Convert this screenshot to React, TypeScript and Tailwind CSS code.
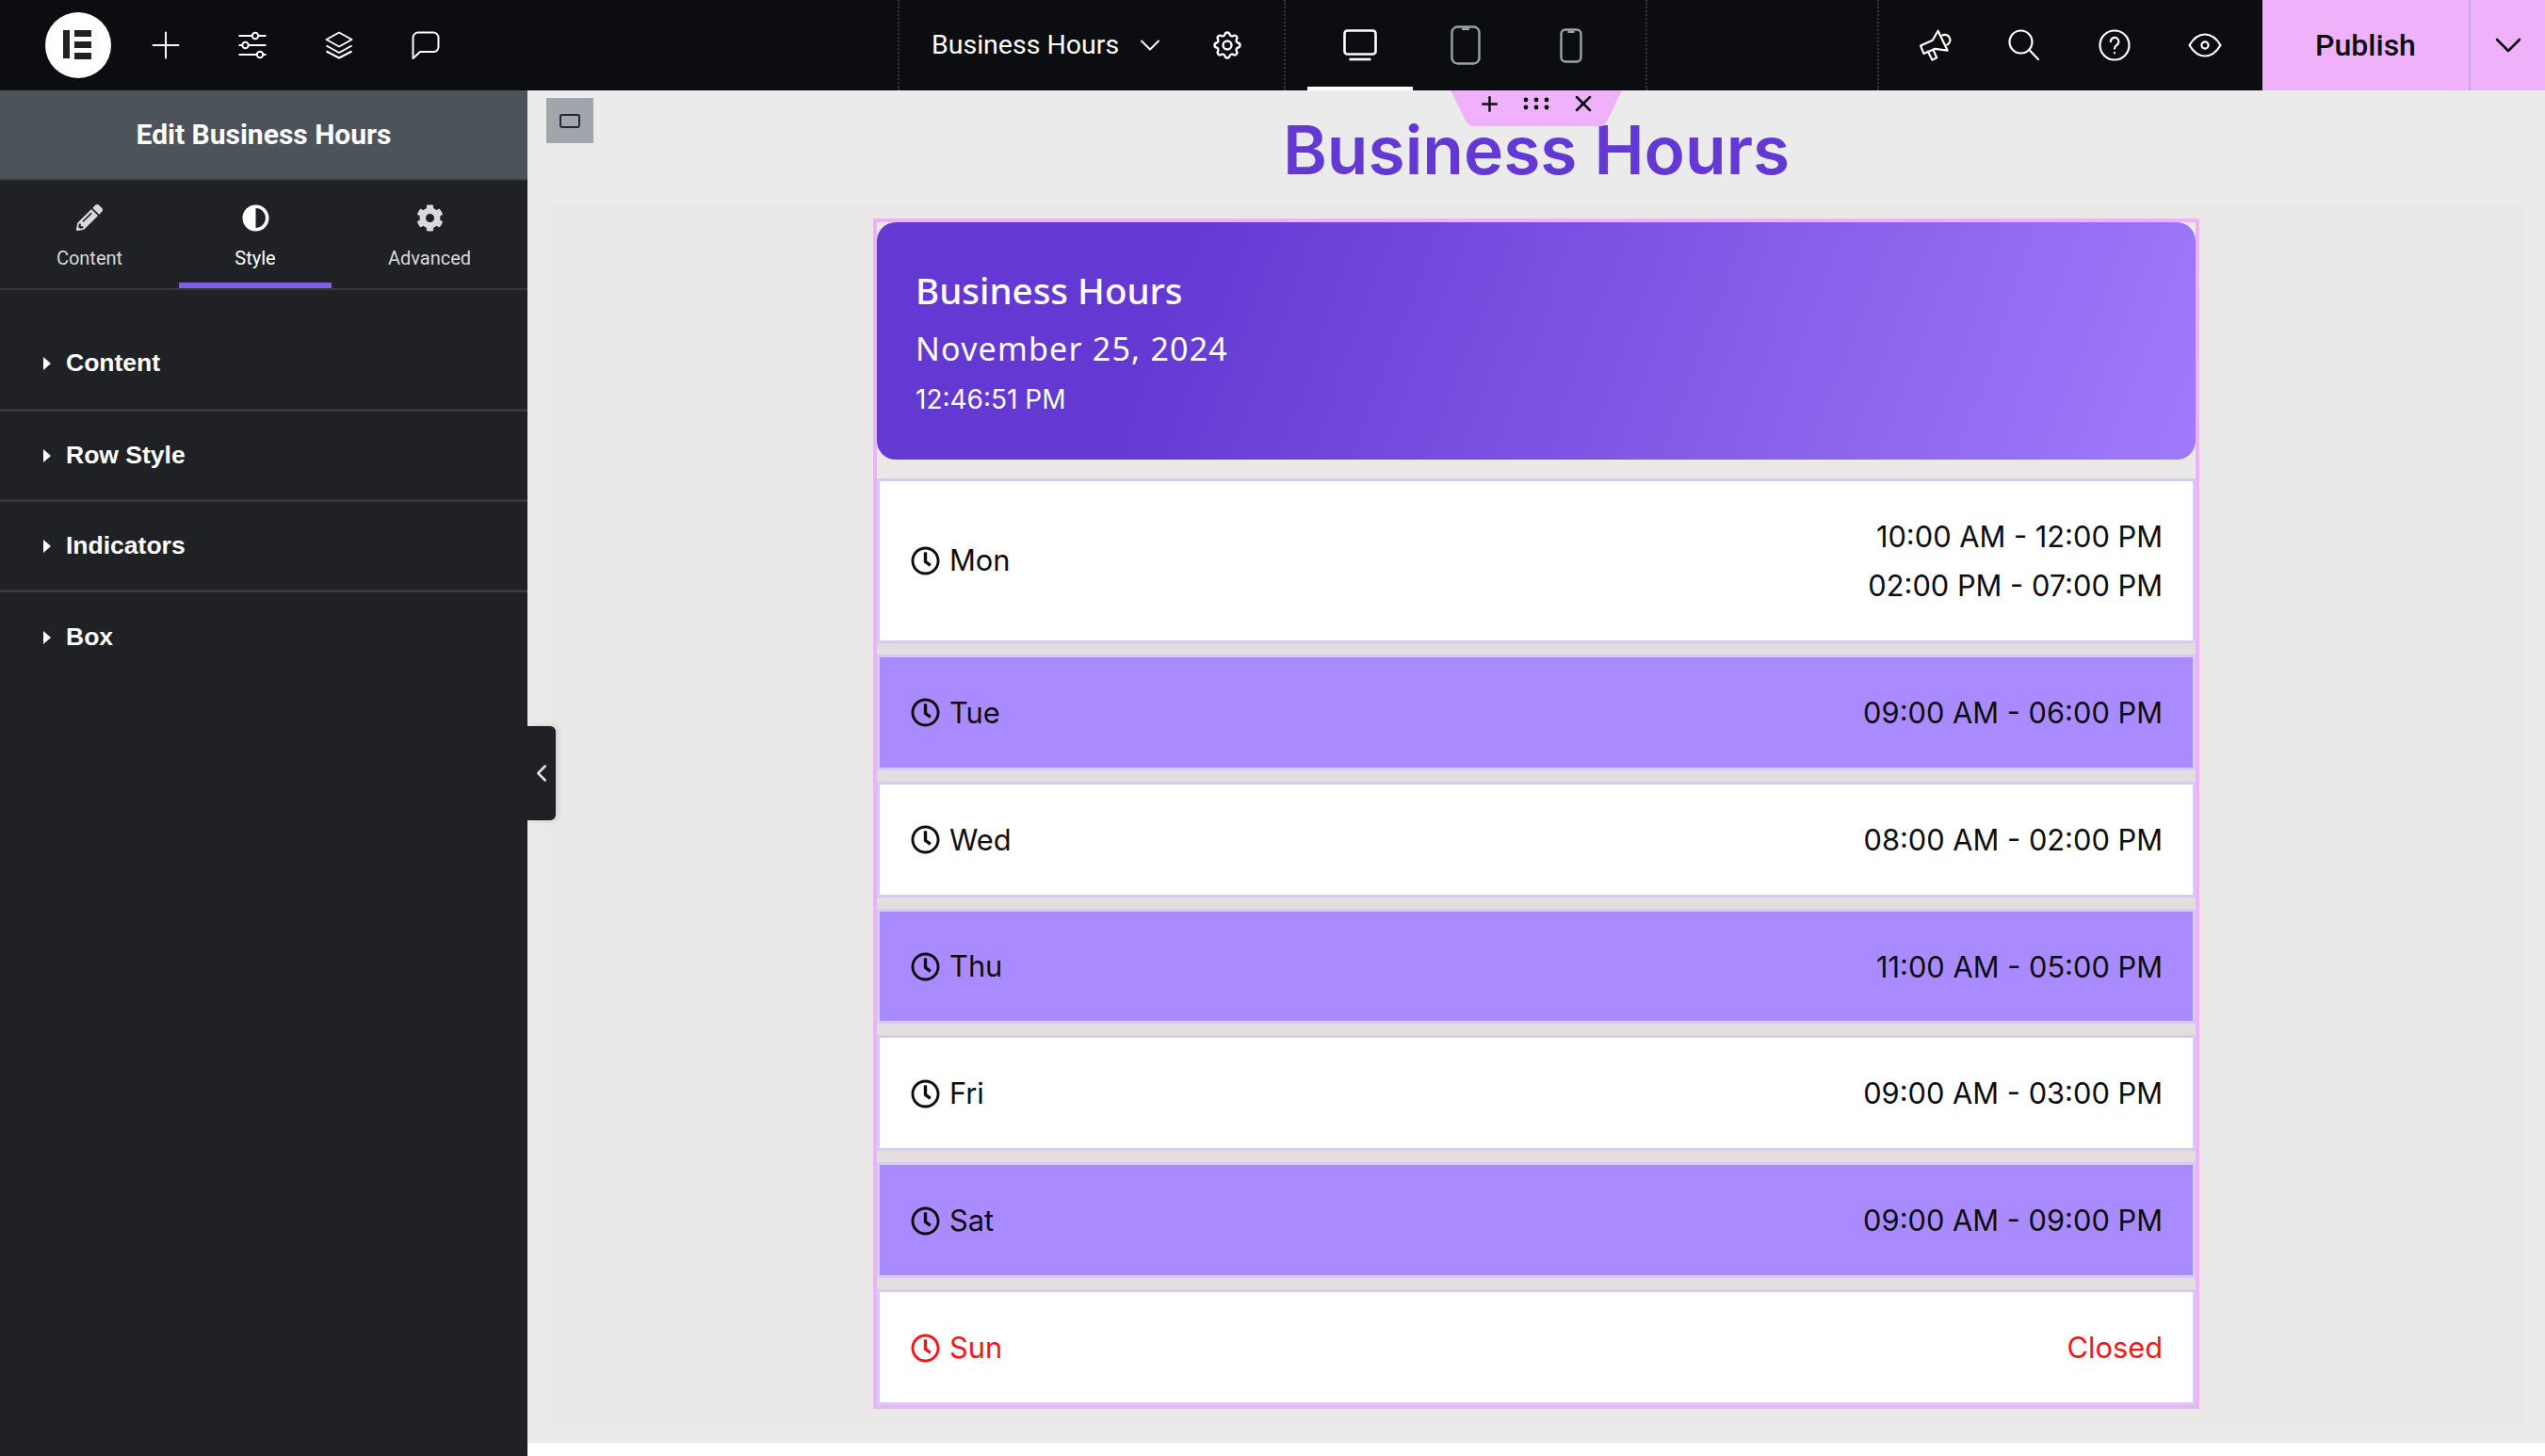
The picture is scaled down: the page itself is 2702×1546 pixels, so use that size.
import { ChevronDown, ChevronLeft, Plus, X } from "lucide-react";
import { FaAdjust, FaCog, FaPencilAlt, FaRegClock } from "react-icons/fa";
import { TbSettings } from "react-icons/tb";

const hours = [
  { day: "Mon", times: ["10:00 AM - 12:00 PM", "02:00 PM - 07:00 PM"] },
  { day: "Tue", times: ["09:00 AM - 06:00 PM"] },
  { day: "Wed", times: ["08:00 AM - 02:00 PM"] },
  { day: "Thu", times: ["11:00 AM - 05:00 PM"] },
  { day: "Fri", times: ["09:00 AM - 03:00 PM"] },
  { day: "Sat", times: ["09:00 AM - 09:00 PM"] },
  { day: "Sun", times: ["Closed"], closed: true },
];

const sections = ["Content", "Row Style", "Indicators", "Box"];

const Logo = () => (
  <svg width="70" height="70" viewBox="0 0 70 70">
    <circle cx="35" cy="35" r="35" fill="#fff" />
    <rect x="19" y="19" width="7" height="30" fill="#1f2124" />
    <rect x="31" y="19" width="18" height="7" fill="#1f2124" />
    <rect x="31" y="31" width="18" height="7" fill="#1f2124" />
    <rect x="31" y="43" width="18" height="7" fill="#1f2124" />
  </svg>
);

const SlidersIcon = () => (
  <svg width="30" height="30" viewBox="0 0 30 30" fill="none" stroke="#fff" strokeWidth="2">
    <path d="M0.5 5H29.5M0.5 15H29.5M0.5 25H29.5" />
    <circle cx="18" cy="5" r="3.2" fill="#0c0d10" />
    <circle cx="7.5" cy="15" r="3.2" fill="#0c0d10" />
    <circle cx="23" cy="25" r="3.2" fill="#0c0d10" />
  </svg>
);

const LayersIcon = () => (
  <svg width="30" height="30" viewBox="0 0 30 30" fill="none" stroke="#fff" strokeWidth="2" strokeLinejoin="round">
    <path d="M15 1.5 28.5 9 15 16.5 1.5 9Z" />
    <path d="M1.5 15.5 15 23 28.5 15.5" />
    <path d="M1.5 21.5 15 28.5 28.5 21.5" />
  </svg>
);

const ChatIcon = () => (
  <svg width="30" height="30" viewBox="0 0 30 30" fill="none" stroke="#fff" strokeWidth="2" strokeLinejoin="round">
    <path d="M1.5 7a5.5 5.5 0 0 1 5.5-5.5h16a5.5 5.5 0 0 1 5.5 5.5v10a5 5 0 0 1-5 5H9L1.5 29Z" />
  </svg>
);

const DesktopIcon = () => (
  <svg width="36" height="34" viewBox="0 0 36 34" fill="none" stroke="#fff" strokeWidth="2.6">
    <rect x="1.5" y="1.5" width="33" height="25" rx="3" />
    <path d="M6.5 32H29.5" />
  </svg>
);

const TabletIcon = () => (
  <svg width="32" height="42" viewBox="0 0 32 42" fill="none" stroke="#9da1a8" strokeWidth="2.4">
    <rect x="1.5" y="1.5" width="29" height="39" rx="6" />
    <path d="M12 2.5h8v2.5h-8Z" fill="#9da1a8" stroke="none" />
  </svg>
);

const MobileIcon = () => (
  <svg width="24" height="37" viewBox="0 0 24 37" fill="none" stroke="#9da1a8" strokeWidth="2.4">
    <rect x="1.5" y="1.5" width="21" height="34" rx="4.5" />
    <path d="M8.5 2.5h7v2.5h-7Z" fill="#9da1a8" stroke="none" />
  </svg>
);

const MegaphoneIcon = () => (
  <svg width="37" height="37" viewBox="50 60 110 110" fill="none" stroke="#fff" strokeWidth="6.5" strokeLinejoin="round" strokeLinecap="round">
    <path d="M62 115 100 98 117 68 147 130 108 125 72 140Z" />
    <path d="M85 133 99 160 113 153 102 128" />
    <path d="M131 82A15 15 0 0 1 146 112" />
  </svg>
);

const SearchIcon = () => (
  <svg width="34" height="34" viewBox="0 0 34 34" fill="none" stroke="#fff" strokeWidth="2.2" strokeLinecap="round">
    <circle cx="13.5" cy="13.5" r="12" />
    <path d="M22.5 22 32 32" />
  </svg>
);

const HelpIcon = () => (
  <svg width="34" height="34" viewBox="0 0 34 34" fill="none" stroke="#fff" strokeWidth="2.2" strokeLinecap="round">
    <circle cx="17" cy="17" r="15.5" />
    <path d="M12.8 13.2a4.3 4.3 0 1 1 6.6 3.6c-1.5 1-2.4 1.8-2.4 3.6" />
    <path d="M17 25v.3" />
  </svg>
);

const EyeIcon = () => (
  <svg width="36" height="26" viewBox="0 0 36 26" fill="none" stroke="#fff" strokeWidth="2.2" strokeLinejoin="round">
    <path d="M1.5 13C6 5.5 11.5 1.5 18 1.5S30 5.5 34.5 13C30 20.5 24.5 24.5 18 24.5S6 20.5 1.5 13Z" />
    <circle cx="18" cy="13" r="3.6" />
  </svg>
);

const DotsIcon = () => (
  <svg width="28" height="18" viewBox="0 0 28 18" fill="#0c0d10">
    <circle cx="3" cy="5" r="2.4" />
    <circle cx="14" cy="5" r="2.4" />
    <circle cx="25" cy="5" r="2.4" />
    <circle cx="3" cy="13" r="2.4" />
    <circle cx="14" cy="13" r="2.4" />
    <circle cx="25" cy="13" r="2.4" />
  </svg>
);

const TopBar = () => (
  <header className="flex h-[96px] shrink-0 bg-[#0c0d10] text-white">
    {/* Left tools */}
    <div className="flex w-[953px] items-center pl-[48px]">
      <Logo />
      <div className="ml-[12px] flex items-center">
        <div className="flex w-[92px] justify-center">
          <Plus size={46} strokeWidth={1.05} />
        </div>
        <div className="flex w-[92px] justify-center">
          <SlidersIcon />
        </div>
        <div className="flex w-[92px] justify-center">
          <LayersIcon />
        </div>
        <div className="flex w-[92px] justify-center">
          <ChatIcon />
        </div>
      </div>
    </div>

    {/* Document */}
    <div className="flex w-[410px] items-center border-l-2 border-dotted border-[#35373b] pl-[34px]">
      <span className="w-[197px] font-['Roboto'] text-[28.5px] whitespace-nowrap">Business Hours</span>
      <ChevronDown size={36} strokeWidth={1.3} className="ml-[17px]" />
      <TbSettings size={36} strokeWidth={1.6} className="ml-[46px]" />
    </div>

    {/* Devices */}
    <div className="flex w-[386px] border-x-2 border-dotted border-[#35373b] pl-[23px]">
      <div className="flex w-[112px] items-center justify-center border-y-4 border-t-transparent border-b-white">
        <DesktopIcon />
      </div>
      <div className="flex w-[112px] items-center justify-center">
        <TabletIcon />
      </div>
      <div className="flex w-[112px] items-center justify-center">
        <MobileIcon />
      </div>
    </div>

    <div className="w-[244px]" />

    {/* Right tools */}
    <div className="flex w-[409px] items-center border-l-2 border-dotted border-[#35373b] pl-[10px]">
      <div className="flex w-[96px] justify-center">
        <MegaphoneIcon />
      </div>
      <div className="flex w-[96px] justify-center">
        <SearchIcon />
      </div>
      <div className="flex w-[96px] justify-center">
        <HelpIcon />
      </div>
      <div className="flex w-[96px] justify-center">
        <EyeIcon />
      </div>
    </div>

    {/* Publish */}
    <div className="flex w-[300px] bg-[#efb2fa] text-[#0c0d10]">
      <div className="flex w-[219px] items-center justify-center font-['Roboto'] text-[32px] font-medium">Publish</div>
      <div className="flex flex-1 items-center justify-center border-l-2 border-[#c8a4f2]">
        <ChevronDown size={48} strokeWidth={1.3} />
      </div>
    </div>
  </header>
);

const Sidebar = () => (
  <aside className="flex w-[560px] shrink-0 flex-col bg-[#1f2124] text-white">
    <div className="flex h-[96px] items-center justify-center border-b-2 border-[#35373b] bg-[#4d535b] pb-[2px] font-['Roboto'] text-[30px] font-bold">
      Edit Business Hours
    </div>
    <div className="grid h-[116px] grid-cols-[190px_162px_208px] border-b-2 border-[#35373b] font-['Roboto'] text-[20px] text-[#d8dade]">
      <div className="flex flex-col items-center pt-[25px]">
        <FaPencilAlt size={28} />
        <span className="mt-[14px]">Content</span>
      </div>
      <div className="flex flex-col items-center border-b-[6px] border-[#7f5fe6] pt-[25px] text-white">
        <FaAdjust size={29} />
        <span className="mt-[13px]">Style</span>
      </div>
      <div className="flex flex-col items-center pt-[25px]">
        <FaCog size={29} />
        <span className="mt-[13px]">Advanced</span>
      </div>
    </div>
    <div className="mt-[33px] flex flex-col font-['Liberation_Sans'] text-[26.5px] font-bold">
      {sections.map((section, i) => (
        <div
          key={section}
          className={
            i === 0
              ? "flex h-[96px] items-center border-b-[3px] border-[#35373b] pb-[3px] pl-[46px]"
              : "flex h-[96px] items-center border-b-[3px] border-[#35373b] pl-[46px] last:border-b-0"
          }
        >
          <svg width="8" height="14" viewBox="0 0 8 14" fill="#fff">
            <path d="M0 0 8 7 0 14Z" />
          </svg>
          <span className="ml-[16px]">{section}</span>
        </div>
      ))}
    </div>
  </aside>
);

const HoursCard = () => (
  <div className="mx-auto flex h-[1264px] w-[1408px] flex-col border-4 border-[#edb3f9]">
    <div className="flex h-[252px] shrink-0 flex-col rounded-[20px] bg-[linear-gradient(110deg,#6439d3_22%,#a07bfa_100%)] pt-[44px] pl-[41px] text-white">
      <div className="font-['Noto_Sans'] text-[38.5px] leading-[56px] font-medium">Business Hours</div>
      <div className="mt-[11px] font-['Noto_Sans'] text-[34px] leading-[46px] tracking-[1.2px]">November 25, 2024</div>
      <div className="mt-[14px] font-['Inter'] text-[28px] leading-[34px]">12:46:51 PM</div>
    </div>
    <div className="mt-[20px] flex flex-1 flex-col gap-[12px] bg-[#e2dedd] font-['Inter'] text-[30.8px] text-[#0c0d10]">
      {hours.map((row, i) => (
        <div
          key={row.day}
          className={`flex items-center justify-between border-[3px] border-[#d8c9f5] pr-[32px] pl-[33px] ${
            i === 0 ? "h-[175px] shrink-0" : "flex-1 pt-[1px]"
          } ${i % 2 === 1 ? "bg-[#aa8bff]" : "bg-white"} ${row.closed ? "text-[#f8141c]" : ""}`}
        >
          <div className="flex items-center gap-[10px]">
            <FaRegClock size={31} />
            <span>{row.day}</span>
          </div>
          <div className="text-right leading-[52px]">
            {row.times.map((time) => (
              <div key={time}>{time}</div>
            ))}
          </div>
        </div>
      ))}
    </div>
  </div>
);

const Canvas = () => (
  <main className="relative flex flex-1 flex-col bg-white">
    <div className="flex h-[1436px] flex-col bg-[#ebebeb] pr-[20px] pl-[20px]">
      <h1 className="flex h-[120px] shrink-0 items-end justify-center pb-[13px] font-['Inter'] text-[71.3px] leading-[88px] font-semibold text-[#6439d3]">
        Business Hours
      </h1>
      <section className="h-[1296px] bg-[#eae9e7] pt-[16px]">
        <HoursCard />
      </section>
    </div>

    {/* Canvas overlays */}
    <div className="absolute top-[8px] left-[20px] flex h-[48px] w-[50px] items-center justify-center bg-[#a2a5ac]">
      <div className="h-[15px] w-[22px] rounded-[3px] border-2 border-[#26272b]" />
    </div>
    <div className="absolute top-0 left-[980px] flex h-[38px] w-[182px] items-start justify-center bg-[#efb2fa] pt-[4px] [clip-path:polygon(0_0,182px_0,166px_33px,162px_38px,22px_38px,17px_34px)]">
      <div className="flex h-[20px] w-[50px] items-center justify-center">
        <Plus size={25} strokeWidth={2.4} color="#0c0d10" className="shrink-0" />
      </div>
      <div className="flex h-[20px] w-[50px] items-center justify-center">
        <DotsIcon />
      </div>
      <div className="flex h-[20px] w-[50px] items-center justify-center">
        <X size={28} strokeWidth={2.2} color="#0c0d10" className="shrink-0" />
      </div>
    </div>
    <div className="absolute top-[675px] left-0 flex h-[100px] w-[30px] items-center justify-center rounded-r-[6px] bg-[#1f2124] text-[#e0e0e5] shadow-[2px_0_6px_rgba(0,0,0,0.15)]">
      <ChevronLeft size={30} strokeWidth={2} className="shrink-0" />
    </div>
  </main>
);

export default function App() {
  return (
    <div className="flex h-[1546px] w-[2702px] flex-col overflow-hidden">
      <TopBar />
      <div className="flex flex-1">
        <Sidebar />
        <Canvas />
      </div>
    </div>
  );
}
